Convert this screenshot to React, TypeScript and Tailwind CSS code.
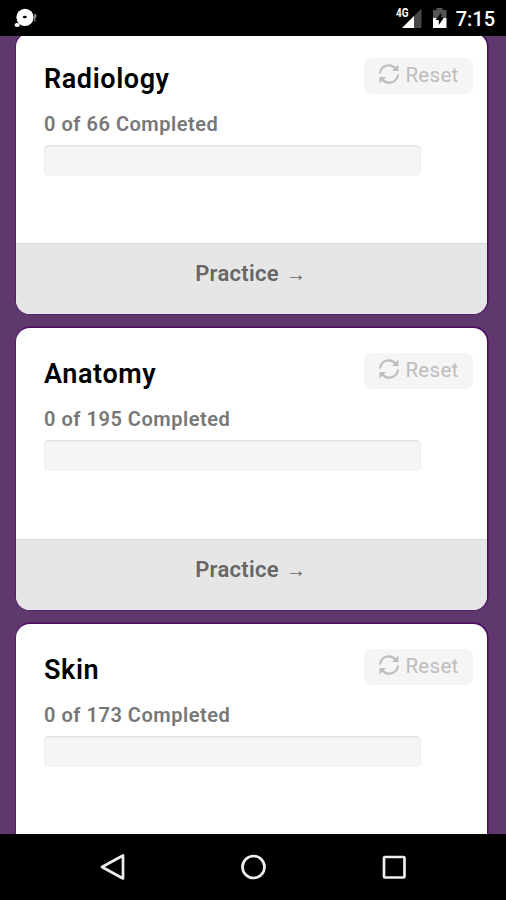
import type { ReactNode } from 'react';

const categories = [
    { name: 'Radiology', done: 0, total: 66, inView: true },
    { name: 'Anatomy', done: 0, total: 195, inView: true },
    { name: 'Skin', done: 0, total: 173, inView: false },
];

function StatusBar() {
    return (
        <header className="relative z-10 flex h-9 shrink-0 items-center bg-black pl-[14px] pr-[11px] text-white">
            {/* Notification */}
            <svg width="24" height="22" viewBox="0 0 24 22" fill="currentColor">
                <circle cx="11" cy="10.3" r="8.6" />
                <ellipse cx="3.2" cy="17.9" rx="2.6" ry="2" />
                <ellipse cx="10.8" cy="10" rx="2" ry="1.3" fill="#000" />
                <path d="M20 7.500l1.300-1 1.200 1.500v2l-1 1v3.500h-1.300l-.2-4z" opacity=".5" />
            </svg>
            <div className="ml-auto flex items-center">
                {/* Signal */}
                <svg width="28" height="24" viewBox="0 0 28 24">
                    <path d="M25.500 2.500V22H6z" fill="#474747" />
                    <path d="M18 10V22H6z" fill="#fff" />
                    <text x="0" y="11" fill="#fff" fontFamily="Roboto" fontSize="12" fontWeight="700" textLength="12.500" lengthAdjust="spacingAndGlyphs">4G</text>
                </svg>
                {/* Battery */}
                <svg className="ml-2" width="16" height="24" viewBox="0 0 16 24">
                    <path d="M1 4h3.500V2h6v2H14.500v8H1z" fill="#555" />
                    <path d="M1 12h13.500v10H1z" fill="#fff" />
                    <path d="M9.500 6.500L3.500 14h3.300v5L12 11.500H9.200z" fill="#000" />
                </svg>
                <span className="ml-[8px] mt-[2px] text-[20px] font-medium leading-6">7:15</span>
            </div>
        </header>
    );
}

function ResetButton() {
    return (
        <button className="flex h-[36px] w-[109px] items-center rounded-[7px] bg-[#f5f5f5] pl-[14px] text-[20.5px] tracking-[0.3px] text-[#bdbdbd]">
            <svg className="-mt-[4px] mr-[5px]" width="22" height="22" viewBox="0 0 22 22" fill="none" stroke="#bdbdbd" strokeWidth="2.200">
                <path d="M2 10.500A8.800 8.800 0 0 1 17.500 5.500" />
                <path d="M20 11.500A8.800 8.800 0 0 1 4.500 16.500" />
                <path d="M20.500 1.500v6.500h-6.500z" fill="#bdbdbd" stroke="none" />
                <path d="M1.500 20.500v-6.500h6.500z" fill="#bdbdbd" stroke="none" />
            </svg>
            <span className="-mt-px">Reset</span>
        </button>
    );
}

type CardProps = { name: string; done: number; total: number; inView: boolean };

function CategoryCard({ name, done, total, inView }: CardProps) {
    return (
        <section className="flex h-[281.5px] shrink-0 flex-col overflow-hidden rounded-[14px] bg-white shadow-[0.5px_-0.5px_0_1px_#4b0a60]">
            <div className="h-[210.5px] shrink-0 pl-7 pr-[14px] pt-[25px]">
                <div className="flex items-start justify-between">
                    <h2 className="mt-[3px] text-[27px] font-semibold leading-9 tracking-[0.6px] text-black">{name}</h2>
                    <ResetButton />
                </div>
                <p className="mt-[14px] text-[20px] font-semibold leading-[26px] tracking-[0.53px] text-[#777]">
                    {done} of {total} Completed
                </p>
                <div className="mt-[8px] h-[31px] w-[377px] overflow-hidden rounded-[5px] bg-[#f5f5f5] shadow-[inset_0_1px_2px_rgba(0,0,0,0.1)]">
                    <div className="h-full bg-[#5f386d]" style={{ width: `${(done / total) * 100}%` }} />
                </div>
            </div>
            {inView && (
                <button className="flex h-[71px] justify-center border-t border-[#dcdcdc] bg-[#e6e6e6] pr-[2px] pt-[17px] text-[22px] font-semibold leading-[26px] tracking-[0.3px] text-[#666]">
                    Practice <span className="ml-[7px] text-[20px]">→</span>
                </button>
            )}
        </section>
    );
}

function NavKey({ label, children }: { label: string; children: ReactNode }) {
    return (
        <button aria-label={label} className="flex w-[140.5px] justify-center">
            <svg width="30" height="30" viewBox="0 0 30 30" fill="none" stroke="#eee" strokeWidth="2.700" strokeLinejoin="round">
                {children}
            </svg>
        </button>
    );
}

export default function App() {
    return (
        <div className="flex h-[900px] w-[506px] flex-col overflow-hidden bg-[#5f386d] font-['Roboto',sans-serif]">
            <StatusBar />
            <main className="flex min-h-0 flex-1 flex-col overflow-hidden pl-4 pr-[18.6px]">
                <div className="-mt-[3.5px] flex flex-col gap-[14px]">
                    {categories.map((category) => (
                        <CategoryCard key={category.name} {...category} />
                    ))}
                </div>
            </main>
            <nav className="flex h-[66.5px] shrink-0 items-center justify-center bg-black">
                <NavKey label="Back">
                    <path d="M25 3.500v23L4 15z" />
                </NavKey>
                <NavKey label="Home">
                    <circle cx="15.500" cy="15" r="11" />
                </NavKey>
                <NavKey label="Overview">
                    <rect x="5" y="5" width="20.500" height="20.500" rx="1" />
                </NavKey>
            </nav>
        </div>
    );
}
